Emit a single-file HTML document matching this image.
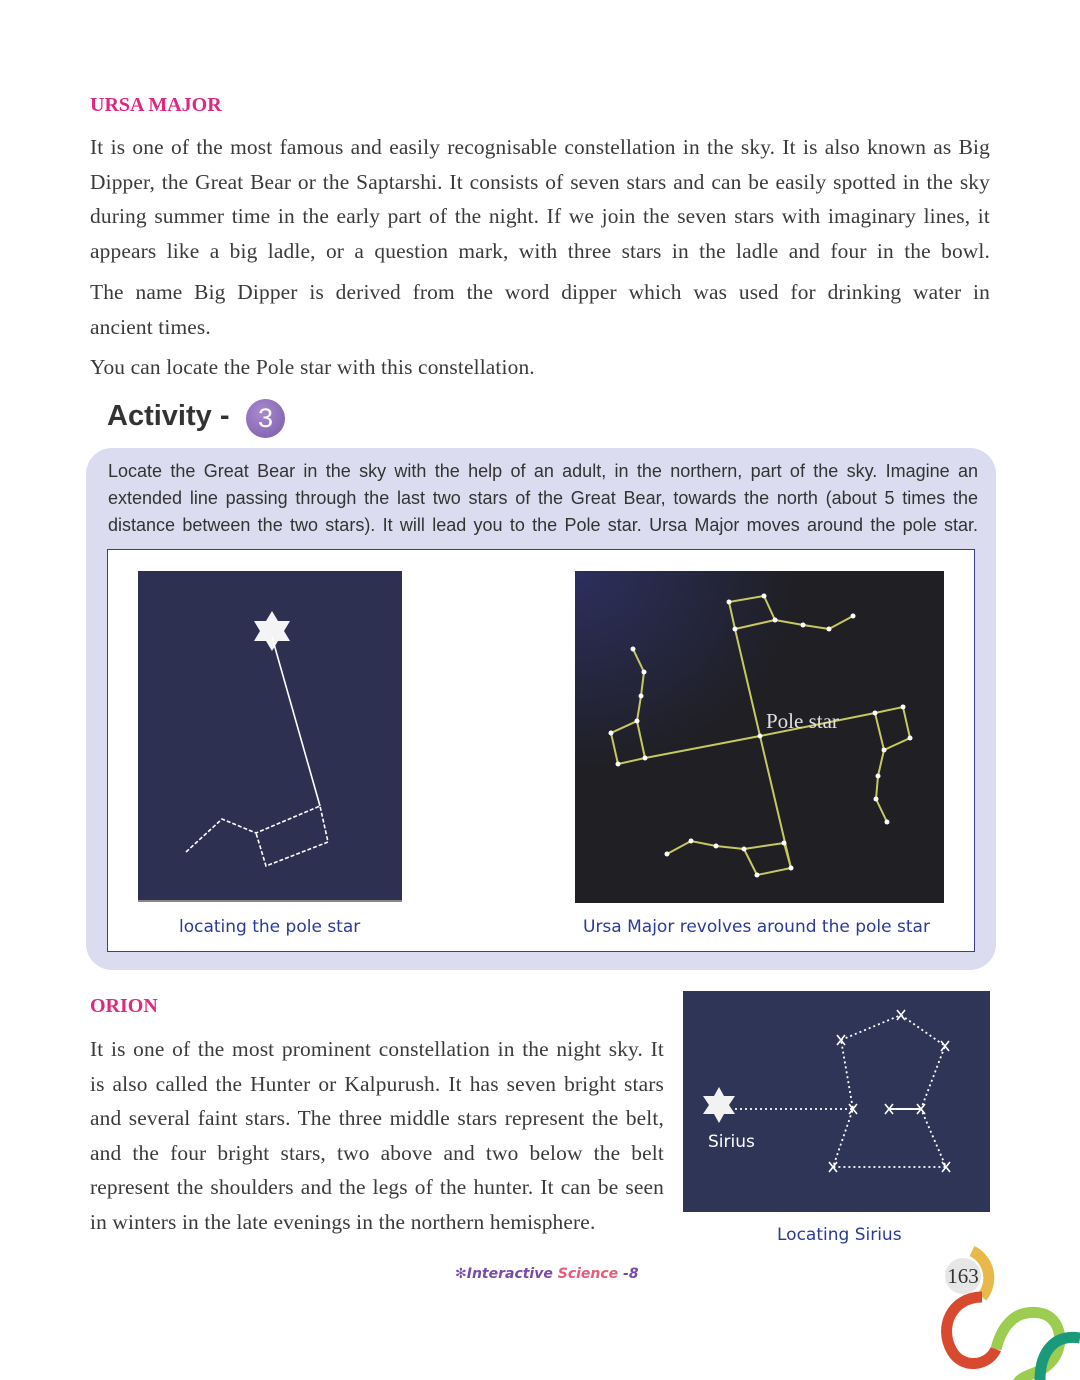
<!DOCTYPE html>
<html><head><meta charset="utf-8"><style>
body{margin:0;background:#fff;width:1080px;height:1380px;position:relative;overflow:hidden;font-family:"Liberation Serif",serif;color:#333}
.p{position:absolute;left:90px;width:900px;font-size:21.4px;letter-spacing:0.15px;line-height:34.5px;margin:0;color:#3a3a3a;white-space:nowrap}
.p span{display:block;text-align:justify;text-align-last:justify}
.p span.l{text-align-last:left}
.h{position:absolute;left:90px;color:#e0287f;font-weight:bold;font-size:20px;margin:0}
.s{font-family:"DejaVu Sans",sans-serif;color:#2a3a9a;font-size:17px;position:absolute}
.a{position:absolute;left:108px;width:870px;font-family:'Liberation Sans',sans-serif;font-size:18px;line-height:27px;color:#333;white-space:nowrap}
.a span{display:block;text-align:justify;text-align-last:justify}
</style></head><body>
<div class="h" style="top:94px">URSA MAJOR</div>
<div class="p" style="top:130px"><span>It is one of the most famous and easily recognisable constellation in the sky. It is also known as Big</span><span>Dipper, the Great Bear or the Saptarshi. It consists of seven stars and can be easily spotted in the sky</span><span>during summer time in the early part of the night. If we join the seven stars with imaginary lines, it</span><span>appears like a big ladle, or a question mark, with three stars in the ladle and four in the bowl.</span></div>
<div class="p" style="top:275px"><span>The name Big Dipper is derived from the word dipper which was used for drinking water in</span><span class="l">ancient times.</span></div>
<div class="p" style="top:350px"><span class="l">You can locate the Pole star with this constellation.</span></div>
<div style="position:absolute;left:107px;top:400px;font-family:'Liberation Sans',sans-serif;font-size:29px;font-weight:bold;color:#333">Activity -</div>
<div style="position:absolute;left:246px;top:399px;width:39px;height:39px;border-radius:50%;background:radial-gradient(circle at 40% 35%,#a98ad0,#7a5aa8);color:#fff;font-family:'Liberation Sans',sans-serif;font-size:27px;text-align:center;line-height:39px">3</div>
<div style="position:absolute;left:86px;top:448px;width:910px;height:522px;background:#dcdcf0;border-radius:26px"></div>
<div class="a" style="top:458px"><span>Locate the Great Bear in the sky with the help of an adult, in the northern, part of the sky. Imagine an</span><span>extended line passing through the last two stars of the Great Bear, towards the north (about 5 times the</span><span>distance between the two stars). It will lead you to the Pole star. Ursa Major moves around the pole star.</span></div>
<div style="position:absolute;left:107px;top:549px;width:866px;height:401px;background:#fff;border:1.5px solid #3e3e8e"></div>
<svg style="position:absolute;left:138px;top:571px" width="264" height="331"><rect width="264" height="331" fill="#2e3052"/><rect y="329" width="264" height="2" fill="#888"/>
<polygon points="134,40 140,50 152,50 146,60 152,70 140,70 134,80 128,70 116,70 122,60 116,50 128,50" fill="#f4f4f4"/>
<g stroke="#fff" stroke-width="1.6" fill="none"><line x1="134" y1="66" x2="182" y2="235"/><polyline stroke-dasharray="4 2" points="48,281 84,248 118,262 182,235 190,271 128,295 118,262"/></g></svg>
<svg style="position:absolute;left:575px;top:571px" width="369" height="332"><defs><radialGradient id="g" cx="0" cy="0" r="0.6"><stop offset="0" stop-color="#2c2f5e"/><stop offset="1" stop-color="#1f1f24"/></radialGradient></defs><rect width="369" height="332" fill="url(#g)"/>
<g stroke="#c8c860" stroke-width="2" fill="none"><polyline points="154,31 189,25 200,49 228,54 254,58 278,45"/><polyline points="154,31 160,58 200,49"/><polyline points="160,58 185,165 216,297"/><polyline points="92,283 116,270 141,275 169,278 209,272 216,297 182,304 169,278"/><polyline points="58,78 69,101 66,125 62,150 36,162 43,193 70,187 62,150"/><polyline points="70,187 185,165 300,142 328,136 335,167 309,179 300,142"/><polyline points="309,179 303,205 301,228 312,251"/></g>
<g fill="#fff"><circle cx="154" cy="31" r="2.5"/><circle cx="189" cy="25" r="2.5"/><circle cx="200" cy="49" r="2.5"/><circle cx="228" cy="54" r="2.5"/><circle cx="254" cy="58" r="2.5"/><circle cx="278" cy="45" r="2.5"/><circle cx="160" cy="58" r="2.5"/><circle cx="185" cy="165" r="2.5"/><circle cx="216" cy="297" r="2.5"/><circle cx="209" cy="272" r="2.5"/><circle cx="182" cy="304" r="2.5"/><circle cx="169" cy="278" r="2.5"/><circle cx="141" cy="275" r="2.5"/><circle cx="116" cy="270" r="2.5"/><circle cx="92" cy="283" r="2.5"/><circle cx="58" cy="78" r="2.5"/><circle cx="69" cy="101" r="2.5"/><circle cx="66" cy="125" r="2.5"/><circle cx="62" cy="150" r="2.5"/><circle cx="36" cy="162" r="2.5"/><circle cx="43" cy="193" r="2.5"/><circle cx="70" cy="187" r="2.5"/><circle cx="300" cy="142" r="2.5"/><circle cx="328" cy="136" r="2.5"/><circle cx="335" cy="167" r="2.5"/><circle cx="309" cy="179" r="2.5"/><circle cx="303" cy="205" r="2.5"/><circle cx="301" cy="228" r="2.5"/><circle cx="312" cy="251" r="2.5"/></g>
<text x="191" y="157" font-family="Liberation Serif,serif" font-size="21" fill="#e0e0e0">Pole star</text></svg>
<div class="s" style="left:179px;top:917px">locating the pole star</div>
<div class="s" style="left:583px;top:917px">Ursa Major revolves around the pole star</div>
<div class="h" style="top:995px">ORION</div>
<div class="p" style="top:1032px;width:574px"><span>It is one of the most prominent constellation in the night sky. It</span><span>is also called the Hunter or Kalpurush. It has seven bright stars</span><span>and several faint stars. The three middle stars represent the belt,</span><span>and the four bright stars, two above and two below the belt</span><span>represent the shoulders and the legs of the hunter. It can be seen</span><span class="l">in winters in the late evenings in the northern hemisphere.</span></div>
<svg style="position:absolute;left:683px;top:991px" width="307" height="221"><rect width="307" height="221" fill="#2f3556"/>
<polygon points="36,96 41,105 52,105 46,114 52,123 41,123 36,132 31,123 20,123 26,114 20,105 31,105" fill="#f2f2f2"/>
<g stroke="#fff" stroke-width="1.8" stroke-dasharray="2 3" fill="none"><polyline points="158,49 218,24 262,55 238,118 263,176 150,176 170,118 158,49"/><line x1="52" y1="118" x2="170" y2="118"/></g>
<line x1="206" y1="118" x2="238" y2="118" stroke="#fff" stroke-width="2"/>
<g stroke="#fff" stroke-width="1.6"><path d="M154 44l8 10M162 44l-8 10M214 19l8 10M222 19l-8 10M258 50l8 10M266 50l-8 10M166 113l8 10M174 113l-8 10M202 113l8 10M210 113l-8 10M234 113l8 10M242 113l-8 10M146 171l8 10M154 171l-8 10M259 171l8 10M267 171l-8 10"/></g>
<text x="25" y="156" font-family="DejaVu Sans,sans-serif" font-size="17" fill="#fff">Sirius</text></svg>
<div class="s" style="left:777px;top:1225px">Locating Sirius</div>
<div style="position:absolute;left:455px;top:1266px;font-family:'DejaVu Sans',sans-serif;font-style:italic;font-weight:bold;font-size:14px;color:#7a4aa8">✻Interactive <span style="color:#e85a7a">Science</span> -8</div>
<div style="position:absolute;left:945px;top:1258px;width:36px;height:36px;border-radius:50%;background:#e6e6e6;font-size:21px;line-height:36px;text-align:center;color:#333">163</div>
<svg style="position:absolute;left:930px;top:1245px" width="150" height="135" fill="none" stroke-width="11">
<path d="M42 6a30 30 0 0 1 10 46" stroke="#e8b84a"/>
<path d="M52 52c-30 0-44 30-30 54 10 18 36 16 44 -2" stroke="#d84a30"/>
<path d="M66 104c6 -24 20 -40 44 -36 22 4 26 34 10 50 -14 14 -30 10 -34 24" stroke="#9ccc50"/>
<path d="M110 135c0 -28 14 -46 40 -42" stroke="#1a9a7a"/>
</svg>
</body></html>
